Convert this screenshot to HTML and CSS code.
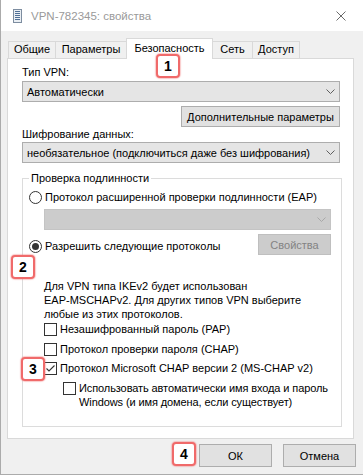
FILE: index.html
```html
<!DOCTYPE html>
<html lang="ru">
<head>
<meta charset="utf-8">
<title>VPN-782345: свойства</title>
<link rel="stylesheet" href="styles.css">
</head>
<body>
<div class="window">
  <header class="titlebar">
    <svg class="app-icon" width="9" height="14" viewBox="0 0 9 14">
      <rect x="0.5" y="0.5" width="8" height="13" fill="#e9eef3" stroke="#7d8da0"/>
      <rect x="2" y="2" width="5" height="1" fill="#4f6f96"/>
      <rect x="2" y="4" width="5" height="1" fill="#4f6f96"/>
      <rect x="2" y="6" width="5" height="1" fill="#4f6f96"/>
      <rect x="2" y="8" width="5" height="1" fill="#4f6f96"/>
      <rect x="2" y="10" width="5" height="1" fill="#4f6f96"/>
    </svg>
    <span class="title">VPN-782345: свойства</span>
    <svg class="close" width="10" height="10" viewBox="0 0 10 10">
      <path d="M0.5 0.5 L9.5 9.5 M9.5 0.5 L0.5 9.5" stroke="#6a6a6a" stroke-width="1" fill="none"/>
    </svg>
  </header>
  <div class="client">
    <div class="tabs">
      <div class="tab tab-general">Общие</div>
      <div class="tab tab-params">Параметры</div>
      <div class="tab tab-security active">Безопасность</div>
      <div class="tab tab-net">Сеть</div>
      <div class="tab tab-access">Доступ</div>
    </div>
    <div class="panel">
      <span class="badge badge-1">1</span>
      <span class="badge badge-2">2</span>
      <span class="badge badge-3">3</span>

      <div class="field-label">Тип VPN:</div>
      <div class="select">
        <span class="select-text">Автоматически</span>
        <svg class="chev" width="9" height="5" viewBox="0 0 9 5"><polyline points="0.5,0.5 4.5,4.5 8.5,0.5" fill="none" stroke="#5f5f5f"/></svg>
      </div>
      <button class="btn btn-advanced">Дополнительные параметры</button>
      <div class="field-label tight">Шифрование данных:</div>
      <div class="select">
        <span class="select-text">необязательное (подключиться даже без шифрования)</span>
        <svg class="chev" width="9" height="5" viewBox="0 0 9 5"><polyline points="0.5,0.5 4.5,4.5 8.5,0.5" fill="none" stroke="#5f5f5f"/></svg>
      </div>

      <div class="group">
        <div class="legend">Проверка подлинности</div>
        <div class="radio-row row-eap">
          <span class="radio"></span>
          <span>Протокол расширенной проверки подлинности (EAP)</span>
        </div>
        <div class="select select-disabled">
          <span class="select-text"></span>
          <svg class="chev" width="9" height="5" viewBox="0 0 9 5"><polyline points="0.5,0.5 4.5,4.5 8.5,0.5" fill="none" stroke="#a8a8a8"/></svg>
        </div>
        <div class="row-between">
          <div class="radio-row row-allow">
            <span class="radio checked"></span>
            <span>Разрешить следующие протоколы</span>
          </div>
          <button class="btn btn-props" disabled>Свойства</button>
        </div>
        <p class="note">Для VPN типа IKEv2 будет использован<br>EAP-MSCHAPv2. Для других типов VPN выберите<br>любые из этих протоколов.</p>
        <div class="check check-1">
          <span class="box"></span>
          <span>Незашифрованный пароль (PAP)</span>
        </div>
        <div class="check check-2">
          <span class="box"></span>
          <span>Протокол проверки пароля (CHAP)</span>
        </div>
        <div class="check check-3">
          <span class="box">
            <svg width="11" height="11" viewBox="0 0 11 11"><polyline points="1.5,5.5 4,8 9.5,2.5" fill="none" stroke="#333" stroke-width="1.1"/></svg>
          </span>
          <span>Протокол Microsoft CHAP версии 2 (MS-CHAP v2)</span>
        </div>
        <div class="check check-sub">
          <span class="box"></span>
          <span class="sub-text">Использовать автоматически имя входа и пароль<br>Windows (и имя домена, если существует)</span>
        </div>
      </div>
    </div>
    <div class="footer">
      <span class="badge badge-4">4</span>
      <button class="btn btn-dialog">ОК</button>
      <button class="btn btn-dialog">Отмена</button>
    </div>
  </div>
</div>
</body>
</html>
```

FILE: styles.css
```css
* { box-sizing: border-box; }

html, body {
  margin: 0;
  padding: 0;
}

body {
  width: 363px;
  height: 475px;
  overflow: hidden;
  font-family: "Liberation Sans", Arial, sans-serif;
  font-size: 11px;
  color: #000;
  background: #f0f0f0;
}

.window {
  width: 363px;
  height: 475px;
  border-left: 1px solid #ababab;
  border-bottom: 1px solid #ababab;
  background: #f0f0f0;
  display: flex;
  flex-direction: column;
}

/* title bar */
.titlebar {
  height: 31px;
  flex-shrink: 0;
  background: #fff;
  display: flex;
  align-items: center;
}

.app-icon {
  margin-left: 12px;
  flex-shrink: 0;
}

.title {
  margin-left: 9px;
  font-size: 11.5px;
  color: #9a9a9a;
}

.close {
  margin-left: auto;
  margin-right: 17px;
}

/* client area */
.client {
  flex: 1;
  display: flex;
  flex-direction: column;
}

.tabs {
  display: flex;
  align-items: flex-end;
  height: 21px;
  margin: 7px 0 -1px 7px;
  position: relative;
  z-index: 1;
}

.tab {
  height: 17px;
  margin-bottom: 1px;
  margin-left: -1px;
  border: 1px solid #d9d9d9;
  border-bottom: none;
  background: #f0f0f0;
  text-align: center;
  line-height: 15px;
  white-space: nowrap;
}

.tab:first-child { margin-left: 0; }

.tab.active {
  height: 21px;
  margin-bottom: 0;
  background: #fff;
  line-height: 18px;
}

.tab-general { width: 48px; }
.tab-params { width: 72px; }
.tab-security { width: 87px; }
.tab-net { width: 41px; }
.tab-access { width: 48px; }

.panel {
  position: relative;
  margin-left: 6px;
  width: 347px;
  background: #fff;
  border: 1px solid #d9d9d9;
  padding: 0 13px 11px 14px;
  display: flex;
  flex-direction: column;
  flex-shrink: 0;
}

.field-label {
  margin-top: 6px;
  line-height: 15px;
}

.field-label.tight {
  margin-top: 0;
  line-height: 14px;
}

.select {
  height: 21px;
  margin-top: 1px;
  border: 1px solid #adadad;
  background: #e5e5e5;
  display: flex;
  align-items: center;
  padding: 0 4px 0 4px;
  flex-shrink: 0;
}

.select-text {
  flex: 1;
  white-space: nowrap;
}

.chev { flex-shrink: 0; }

.select-disabled {
  margin: 4px 0 0 15px;
  border-color: #c4c4c4;
  background: #cccccc;
}

.btn {
  height: 21px;
  padding: 0;
  border: 1px solid #adadad;
  background: #e1e1e1;
  font-family: inherit;
  font-size: 11px;
  color: #000;
  flex-shrink: 0;
}

.btn-advanced {
  align-self: flex-end;
  width: 159px;
  margin-top: 4px;
}

.btn-props {
  width: 73px;
  border-color: #bfbfbf;
  background: #cccccc;
  color: #838383;
}

/* group box */
.group {
  margin-top: 15px;
  margin-right: -2px;
  border: 1px solid #dcdcdc;
  padding: 0 10px 17px 6px;
  display: flex;
  flex-direction: column;
}

.legend {
  align-self: flex-start;
  margin-top: -8px;
  padding: 0 2px;
  line-height: 14px;
  background: #fff;
}

.radio-row {
  display: flex;
  align-items: center;
  line-height: 15px;
  white-space: nowrap;
}

.row-eap { margin-top: 5px; }

.row-allow { padding-bottom: 1px; }

.radio {
  width: 13px;
  height: 13px;
  margin-right: 3px;
  border: 1px solid #333;
  border-radius: 50%;
  background: #fff;
  display: flex;
  align-items: center;
  justify-content: center;
  flex-shrink: 0;
}

.radio.checked::after {
  content: "";
  width: 7px;
  height: 7px;
  border-radius: 50%;
  background: #333;
}

.row-between {
  display: flex;
  justify-content: space-between;
  align-items: flex-end;
  margin-top: 4px;
}

.note {
  margin: 24px 0 0 15px;
  line-height: 14px;
  white-space: nowrap;
}

.check {
  display: flex;
  align-items: center;
  margin-left: 15px;
  line-height: 15px;
  white-space: nowrap;
}

.check-1 { margin-top: 1px; }
.check-2 { margin-top: 5px; }
.check-3 { margin-top: 4px; }

.check-sub {
  margin-top: 5px;
  margin-left: 34px;
  align-items: flex-start;
  line-height: 14px;
}

.check-sub .box { margin-top: 1px; }

.sub-text { letter-spacing: -0.1px; }

.box {
  width: 13px;
  height: 13px;
  margin-right: 3px;
  border: 1px solid #333;
  background: #fff;
  flex-shrink: 0;
  display: flex;
}

/* footer */
.footer {
  position: relative;
  display: flex;
  justify-content: flex-end;
  gap: 11px;
  padding: 5px 7px 0 0;
}

.btn-dialog {
  width: 73px;
  height: 23px;
}

/* numbered markers */
.badge {
  position: absolute;
  z-index: 5;
  width: 24px;
  height: 24px;
  border: 2px solid #f06a6a;
  border-radius: 4px;
  box-shadow: 0 0 1px 1px rgba(240, 106, 106, 0.35);
  background: #fff;
  font-weight: bold;
  font-size: 14px;
  line-height: 20px;
  text-align: center;
  color: #000;
}

.badge-1 { left: 148px; top: -5px; }
.badge-2 { left: 3px; top: 196px; }
.badge-3 { left: 13px; top: 298px; }
.badge-4 { left: 171px; top: 3px; }
```
